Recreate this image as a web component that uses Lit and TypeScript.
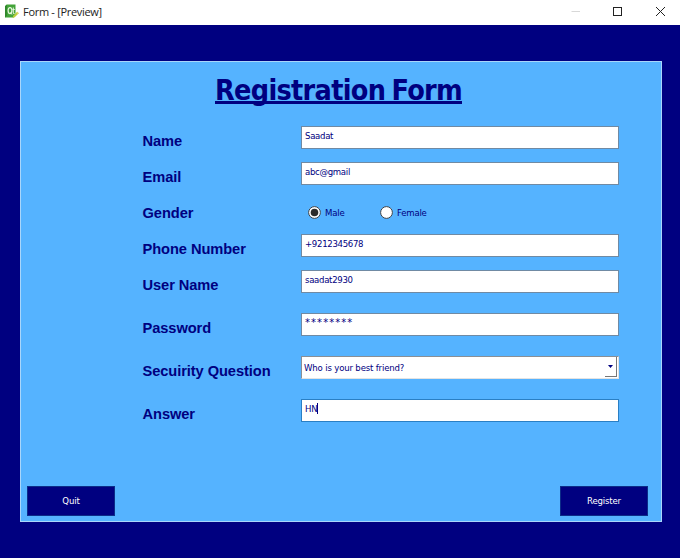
import { LitElement, html, css, svg } from "lit";
import { customElement, property } from "lit/decorators.js";

@customElement("window-bar")
class WindowBar extends LitElement {
  static styles = css`
    :host { display: flex; align-items: center; height: 25px; background: #fff; box-sizing: border-box; padding: 0 14px 0 4px; }
    .logo { width: 16px; height: 16px; margin-top: -2px; }
    .title { flex: 1; margin: 0 0 2px 3px; font: 11px/16px "Open Sans", "Noto Sans", sans-serif; letter-spacing: -0.3px; color: #222; white-space: nowrap; }
    .controls { display: flex; gap: 32px; margin-top: -2px; }
    .controls svg { width: 11px; height: 11px; fill: none; stroke: #222; }
    .controls svg:first-child { margin-right: -1px; }
  `;
  render() {
    return html`
      <svg class="logo" viewBox="0 0 16 16">
        <path d="M1 2.2 2.8 0.5H11.5V11.5L9.8 13.4H1Z" fill="#43a339"></path>
        <path d="M1 2.2 2.8 0.5V11.6L1 13.4Z" fill="#2f852b"></path>
        <ellipse cx="6" cy="6.6" rx="1.9" ry="3" fill="none" stroke="#e9f6df" stroke-width="1.2"></ellipse>
        <path d="M6.5 8.5 8 10.6M9.3 3.5V9.6H10.6M8.5 5.5H10.7" fill="none" stroke="#e9f6df" stroke-width="1"></path>
        <path d="M8.5 14 9.2 11.8 13.2 7.8 14.8 9.3 10.7 13.3Z" fill="#b9cf3e"></path>
        <path d="M12.3 8.7 13.2 7.8 14.8 9.3 13.8 10.3Z" fill="#e2d36f"></path>
      </svg>
      <div class="title">Form - [Preview]</div>
      <div class="controls">
        <svg viewBox="0 0 11 11"><path d="M1.5 5.5H10" stroke="#d8d8d8"></path></svg>
        <svg viewBox="0 0 11 11"><rect x="1.5" y="1.5" width="8" height="8"></rect></svg>
        <svg viewBox="0 0 11 11"><path d="M1 1 10 10M10 1 1 10"></path></svg>
      </div>`;
  }
}

@customElement("radio-option")
class RadioOption extends LitElement {
  @property() label = "";
  @property({ type: Boolean }) checked = false;
  static styles = css`
    :host { display: flex; align-items: center; width: 72px; }
    svg { width: 13px; height: 13px; flex: none; }
    span { margin-left: 4px; font: 9.5px/12px "DejaVu Sans Condensed", "DejaVu Sans", sans-serif; font-stretch: condensed; letter-spacing: -0.2px; color: #000080; }
  `;
  render() {
    return html`
      <svg viewBox="0 0 13 13">
        <circle cx="6.5" cy="6.5" r="5.9" fill="#fff" stroke="#3d4248" stroke-width="1"></circle>
        ${this.checked ? svg`<circle cx="6.5" cy="6.5" r="3.8" fill="#2b2b2b"></circle>` : null}
      </svg>
      <span>${this.label}</span>`;
  }
}

@customElement("app-root")
class AppRoot extends LitElement {
  static styles = css`
    :host { display: flex; flex-direction: column; height: 558px; background: #000080; color: #000080; overflow: hidden;
      font: 9.5px/12px "DejaVu Sans Condensed", "DejaVu Sans", sans-serif; font-stretch: condensed; letter-spacing: -0.3px; white-space: nowrap; }
    .panel { flex: 1; margin: 36px 18px 36px 20px; box-sizing: border-box; background: #55b3ff; border: 1px solid #a9d6fa;
      display: flex; flex-direction: column; padding: 11px 13px 5px 6px; }
    h1 { margin: 0 0 0 -1px; padding-left: 189px; height: 53px; font: bold 28.5px/36px "DejaVu Sans Condensed", "DejaVu Sans", sans-serif;
      font-stretch: condensed; letter-spacing: -0.7px; word-spacing: -2px; }
    h1 span { display: inline-block; height: 28px; border-bottom: 3px solid #000080; }
    .form { display: grid; grid-template-columns: 159px 318px; grid-template-rows: repeat(4, 36px) repeat(4, 43px); padding-left: 115px; flex: 1; align-content: start; }
    label { font: bold 14.67px/18px "Liberation Sans", Arial, sans-serif; letter-spacing: -0.08px; padding: 6px 0 0 0.5px; }
    .field { box-sizing: border-box; height: 23px; background: #fff; border: 1px solid #708aa3; padding: 3px 3px 0; }
    .focused { border-color: #2a7fc4; }
    .masked { letter-spacing: 1.1px; font-size: 11px; }
    .caret { display: inline-block; width: 1px; height: 11px; background: #000080; vertical-align: -2px; }
    .radios { display: flex; height: 29px; padding-left: 7px; }
    .combo { display: flex; justify-content: space-between; box-sizing: border-box; height: 23px; background: #fff;
      border: 1px solid; border-color: #8a8f95 #e3e3e3 #e3e3e3 #8a8f95; padding: 0 1px 1px 2px; line-height: 21px; letter-spacing: -0.16px; }
    .drop { display: flex; align-items: center; justify-content: center; width: 12px; box-sizing: border-box; border-right: 1px solid #777; border-bottom: 1px solid #777; }
    .drop svg { width: 5px; height: 3px; fill: #000080; }
    .actions { display: flex; justify-content: space-between; }
    button { width: 88px; height: 30px; padding: 0; border: 1px solid #0c2c88; background: #000080; color: #fff; font: inherit; letter-spacing: -0.15px; }
  `;
  private field(name: string, value: string, kind = "") {
    return html`<label>${name}</label>
      <div class="field ${kind}">${value}${kind === "focused" ? html`<i class="caret"></i>` : null}</div>`;
  }
  render() {
    return html`
      <window-bar></window-bar>
      <div class="panel">
        <h1><span>Registration Form</span></h1>
        <div class="form">
          ${this.field("Name", "Saadat")}
          ${this.field("Email", "abc@gmail")}
          <label>Gender</label>
          <div class="radios">
            <radio-option label="Male" checked></radio-option>
            <radio-option label="Female"></radio-option>
          </div>
          ${this.field("Phone Number", "+9212345678")}
          ${this.field("User Name", "saadat2930")}
          ${this.field("Password", "********", "masked")}
          <label>Secuirity Question</label>
          <div class="combo">
            <span>Who is your best friend?</span>
            <span class="drop"><svg viewBox="0 0 5 3"><path d="M0 0H5L2.5 3Z"></path></svg></span>
          </div>
          ${this.field("Answer", "HN", "focused")}
        </div>
        <div class="actions"><button>Quit</button><button>Register</button></div>
      </div>`;
  }
}
